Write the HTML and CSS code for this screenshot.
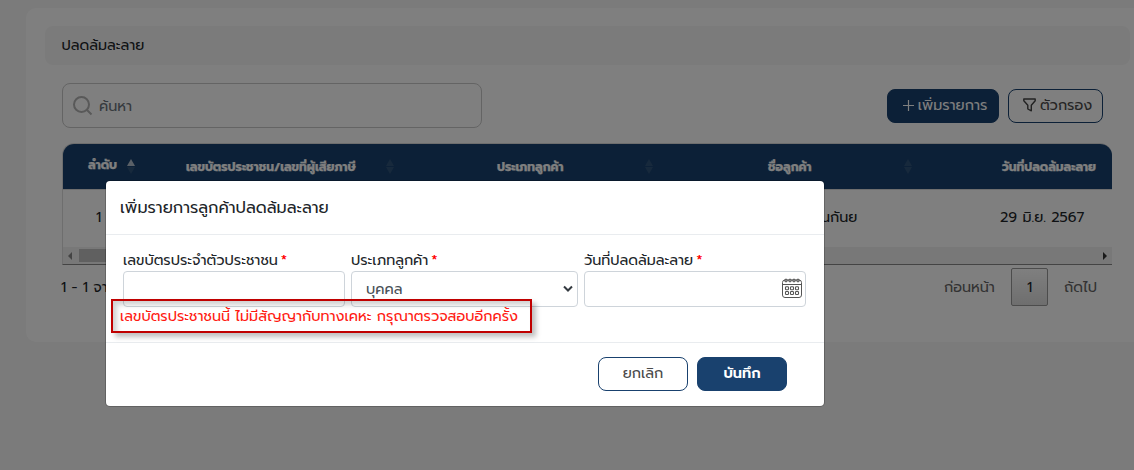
FILE: index.html
```html
<!DOCTYPE html>
<html lang="th">
<head>
<meta charset="utf-8">
<title>ปลดล้มละลาย</title>
<link rel="stylesheet" href="styles.css">
</head>
<body>
<main class="panel">
  <div class="title-bar"><span class="t-title">ปลดล้มละลาย</span></div>
  <div class="toolbar">
    <div class="search">
      <svg width="20" height="20" viewBox="0 0 20 20" fill="none" stroke="#b2b2b2" stroke-width="2"><circle cx="8.5" cy="8.5" r="7.5"/><path d="M14 14l4.5 4.5"/></svg>
      <span class="t-search">ค้นหา</span>
    </div>
    <div class="actions">
      <button class="btn primary add"><svg width="11" height="11" viewBox="0 0 11 11" stroke="#fff" stroke-width="1.2"><path d="M5.5 0v11M0 5.5h11"/></svg><span class="t-add">เพิ่มรายการ</span></button>
      <button class="btn outline filter"><svg width="13" height="14" viewBox="0 0 13 14" fill="none" stroke="#444" stroke-width="1.4" stroke-linejoin="round"><path d="M.8 1h11.4v1.8L8.3 7.2v5.6L4.8 11V7.2L.8 2.8z"/></svg><span class="t-filter">ตัวกรอง</span></button>
    </div>
  </div>
  <div class="table">
    <div class="thead">
      <div class="th c1"><span class="t-h1">ลำดับ</span><i class="sort asc"></i></div>
      <div class="th c2"><span class="t-h2">เลขบัตรประชาชน/เลขที่ผู้เสียภาษี</span><i class="sort"></i></div>
      <div class="th c3"><span class="t-h3">ประเภทลูกค้า</span><i class="sort"></i></div>
      <div class="th c4"><span class="t-h4">ชื่อลูกค้า</span><i class="sort"></i></div>
      <div class="th c5"><span class="t-h5">วันที่ปลดล้มละลาย</span></div>
    </div>
    <div class="row"><span class="no">1</span><span class="name"><span class="t-name">นกันย</span></span><span class="date"><span class="t-date">29 มิ.ย. 2567</span></span></div>
    <div class="scroll"><i class="left"></i><i class="thumb"></i><i class="right"></i></div>
  </div>
  <div class="pager"><span class="info">1 - 1 จาก 1</span><span class="prev"><span class="t-prev">ก่อนหน้า</span></span><span class="current">1</span><span class="next"><span class="t-next">ถัดไป</span></span></div>
</main>
<div class="backdrop">
  <section class="modal">
    <header class="modal-head"><span class="t-modal">เพิ่มรายการลูกค้าปลดล้มละลาย</span></header>
    <div class="modal-body">
      <label class="field f1"><span class="label"><span class="t-l1">เลขบัตรประจำตัวประชาชน</span><b>*</b></span><span class="input"></span></label>
      <label class="field f2"><span class="label"><span class="t-l2">ประเภทลูกค้า</span><b>*</b></span><span class="input select"><span class="t-sel">บุคคล</span><svg width="10" height="8" viewBox="0 0 10 8" fill="none" stroke="#343a40" stroke-width="2"><path d="m1 1.5 4 4 4-4"/></svg></span></label>
      <label class="field f3"><span class="label"><span class="t-l3">วันที่ปลดล้มละลาย</span><b>*</b></span><span class="input date-input">
        <svg width="20" height="20" viewBox="0 0 20 20" fill="none" stroke="#555" stroke-width="1"><rect x=".5" y="2" width="19" height="17.5" rx="2.5"/><path d="M.5 6.5h19"/><g fill="#888" stroke-width=".9"><circle cx="4" cy="2.5" r="1.4"/><circle cx="8" cy="2.5" r="1.4"/><circle cx="12" cy="2.5" r="1.4"/><circle cx="16" cy="2.5" r="1.4"/></g><g stroke-width="1.1"><rect x="3.5" y="8.8" width="3" height="3" rx=".8"/><rect x="8.5" y="8.8" width="3" height="3" rx=".8"/><rect x="13.5" y="8.8" width="3" height="3" rx=".8"/><rect x="3.5" y="13.5" width="3" height="3" rx=".8"/><rect x="8.5" y="13.5" width="3" height="3" rx=".8"/><rect x="13.5" y="13.5" width="3" height="3" rx=".8"/></g></svg></span></label>
      <div class="error"><span class="t-error">เลขบัตรประชาชนนี้ ไม่มีสัญญากับทางเคหะ กรุณาตรวจสอบอีกครั้ง</span></div>
    </div>
    <footer class="modal-foot"><button class="btn outline"><span class="t-cancel">ยกเลิก</span></button><button class="btn primary"><span class="t-save">บันทึก</span></button></footer>
  </section>
</div>
</body>
</html>
```
FILE: styles.css
```css
* { box-sizing: border-box; }
body { margin: 0; width: 1134px; height: 470px; overflow: hidden; background: #f6f6f6; padding: 8px 0 0 26px; font: 14.4px/20px Prompt, "Noto Sans Thai", "Noto Sans", sans-serif; color: #212529; position: relative; }
span { white-space: nowrap; }
.panel { width: 1120px; height: 334px; background: #fff; border-radius: 10px; padding: 18px 0 0 19px; }
.title-bar { width: 1085px; height: 39px; border-radius: 8px; background: #f7f7f7; padding: 9px 16.5px; }
.toolbar { display: flex; justify-content: space-between; width: 1041px; margin: 18px 0 0 17px; }
.search { width: 420px; height: 45px; border: 1px solid #c8c8c8; border-radius: 8px; display: flex; align-items: center; gap: 6px; padding-left: 10px; color: #6c757d; }
.actions { display: flex; gap: 9px; padding-top: 6px; }
.btn { width: 90px; height: 34px; border-radius: 8px; border: 1px solid #19416e; font: inherit; padding: 0 0 2px; display: flex; align-items: center; justify-content: center; gap: 4px; }
.primary { background: #19416e; color: #fff; }
.outline { background: #fff; color: #4a4a4a; }
.add { width: 112px; padding-left: 4px; }
.filter { width: 95px; padding-left: 4px; }
.table { width: 1050px; height: 122px; margin: 15px 0 0 17px; border-top: 1px solid #ddd; border-left: 1px solid #ddd; border-bottom: 1px solid #888; border-radius: 12px 12px 0 0; overflow: hidden; }
.thead { height: 45px; display: flex; background: #19416e; color: #fff; font-weight: 700; font-size: 12.1px; -webkit-text-stroke: .25px #fff; }
.th { display: flex; align-items: center; justify-content: space-between; flex-shrink: 0; }
.t-h1 { padding-bottom: 3px; }
.c1 { width: 72px; padding-left: 25px; }
.c2 { width: 259px; padding-left: 51px; }
.c3 { width: 259px; padding-left: 103px; }
.c4 { width: 259px; padding-left: 115px; }
.c5 { padding-left: 90px; }
.sort { width: 8px; height: 15px; margin-right: 0.5px; display: flex; flex-direction: column; gap: 1px; }
.sort::before, .sort::after { content: ""; border: 4px solid transparent; border-top: 0; border-bottom: 7px solid #2f5379; }
.sort::after { border-bottom: 0; border-top: 7px solid #2f5379; }
.asc::before { border-bottom-color: #b5c1ce; }
.row { height: 58px; border-top: 1px solid #ddd; display: flex; align-items: center; padding-bottom: 4px; }
.no { width: 712px; padding-left: 33px; }
.name { width: 225px; padding-left: 46px; }
.scroll { height: 17px; background: #f1f1f1; display: flex; align-items: center; padding: 0 5px; }
.left { border: 4px solid transparent; border-left: 0; border-right-color: #888; }
.thumb { width: 500px; height: 13px; background: #c1c1c1; margin-left: 7px; }
.right { border: 4px solid transparent; border-right: 0; border-left-color: #333; margin-left: auto; }
.pager { display: flex; align-items: center; height: 38px; margin: 3px 0 0 16px; }
.info { width: 883px; padding-bottom: 1px; }
.prev { width: 67px; color: #666; }
.current { width: 37px; height: 38px; border: 1px solid #989898; border-radius: 2px; background: linear-gradient(#fff, #ddd); text-align: center; line-height: 36px; }
.next { padding-left: 16px; color: #666; }
.backdrop { position: absolute; inset: 0; background: rgba(0, 0, 0, .5); padding: 181px 0 0 106px; }
.modal { width: 718px; height: 225px; background: #fff; border-radius: 4px; box-shadow: 0 0 0 1px rgba(0, 0, 0, .2); }
.modal-head { height: 54px; border-bottom: 1px solid #e9ecef; font-size: 16.2px; padding: 17px 14px; }
.modal-body { height: 107px; display: flex; gap: 6px; padding: 15px 17px; position: relative; }
.field { width: 222px; }
.f2 { width: 227px; }
.label { display: flex; gap: 3px; height: 21px; line-height: 21px; }
.label b { color: red; font-weight: 500; }
.input { display: flex; align-items: center; justify-content: space-between; height: 36px; border: 1px solid #ced4da; border-radius: 4px; color: #495057; }
.select { padding: 0 4px 0 14px; }
.date-input { justify-content: flex-end; padding: 0 3px 2px 0; }
.error { position: absolute; left: 5px; top: 64px; width: 421px; height: 34px; border: 2px solid #c00000; box-shadow: 4px 4px 5px rgba(0, 0, 0, .25), inset 4px 4px 5px rgba(0, 0, 0, .18); color: #ff1a12; padding: 5px 7px; }
.modal-foot { height: 64px; border-top: 1px solid #e9ecef; display: flex; justify-content: flex-end; gap: 9px; padding: 14px 37px; }
.t-save { font-weight: 600; }
```
